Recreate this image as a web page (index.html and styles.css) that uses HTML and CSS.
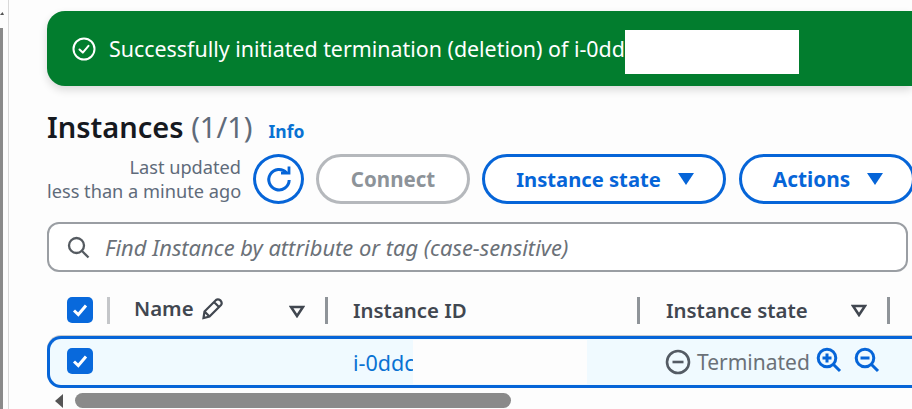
FILE: index.html
```html
<!DOCTYPE html>
<html lang="en">
<head>
<meta charset="utf-8">
<title>Instances</title>
<link rel="stylesheet" href="styles.css">
</head>
<body>
<div class="page">
  <aside class="rail">
    <svg class="rail-arrow" width="4" height="5" viewBox="0 0 4 5"><path d="M0 4 L2.5 1 L4 4Z" fill="#555"/></svg>
    <div class="rail-bar"></div>
  </aside>
  <main class="main">
    <div class="banner">
      <svg class="banner-icon" width="24" height="24" viewBox="0 0 24 24" fill="none" stroke="#fff" stroke-width="2"><circle cx="12" cy="12" r="10.5"/><path d="M7.5 12.5 L10.8 15.6 L16.5 8.8" stroke-linecap="round" stroke-linejoin="round"/></svg>
      <span class="banner-text">Successfully initiated termination (deletion) of i-0dd</span><span class="redact-banner"></span>
    </div>
    <div class="title-row">
      <h1 class="title">Instances <span class="count">(1/1)</span></h1>
      <a class="info">Info</a>
    </div>
    <div class="actions">
      <div class="updated">Last updated<br>less than a minute ago</div>
      <button class="round">
        <svg width="28" height="28" viewBox="0 0 28 28" fill="none" stroke="#0665d8" stroke-width="3"><path d="M21.5 7.8 A10.2 10.2 0 1 0 24.2 15"/><path d="M16 8.2 H24 V1.5" stroke-width="2.8"/></svg>
      </button>
      <button class="btn disabled connect">Connect</button>
      <button class="btn state">Instance state<i class="caret"></i></button>
      <button class="btn acts">Actions<i class="caret"></i></button>
    </div>
    <div class="search">
      <svg width="24" height="24" viewBox="0 0 24 24" fill="none" stroke="#555b61" stroke-width="2.3"><circle cx="10.5" cy="10.5" r="7.5"/><path d="M16 16 L22.5 22.5"/></svg>
      <span class="placeholder">Find Instance by attribute or tag (case-sensitive)</span>
    </div>
    <div class="thead">
      <label class="box"><svg width="26" height="26" viewBox="0 0 26 26"><rect width="26" height="26" rx="5" fill="#0869dc"/><path d="M7 13.5 L11.3 17.5 L19 8.5" fill="none" stroke="#fff" stroke-width="3"/></svg></label>
      <i class="sep sep-a"></i>
      <div class="th th-name">Name
        <svg class="pencil" width="23" height="23" viewBox="0 0 23 23" fill="none" stroke="#414750" stroke-width="2.2"><path d="M2.5 21 L3.5 14.5 L15 3 Q17 1.6 19.5 3.5 Q21.6 6 20 8 L8.5 19.6 Z M3.5 14.5 L8.5 19.6 M13 5 L18 10"/></svg>
      </div>
      <svg class="sort sort-a" width="16" height="13" viewBox="0 0 16 13"><path d="M2 2 H14 L8 11Z" fill="none" stroke="#414750" stroke-width="2.6"/></svg>
      <i class="sep sep-b"></i>
      <div class="th th-id">Instance ID</div>
      <i class="sep sep-c"></i>
      <div class="th th-state">Instance state</div>
      <svg class="sort sort-b" width="16" height="13" viewBox="0 0 16 13"><path d="M2 2 H14 L8 11Z" fill="none" stroke="#414750" stroke-width="2.6"/></svg>
      <i class="sep sep-d"></i>
    </div>
    <div class="row">
      <label class="box"><svg width="26" height="26" viewBox="0 0 26 26"><rect width="26" height="26" rx="5" fill="#0869dc"/><path d="M7 13.5 L11.3 17.5 L19 8.5" fill="none" stroke="#fff" stroke-width="3"/></svg></label>
      <a class="id">i-0ddc</a>
      <div class="redact-row"></div>
      <svg class="state-icon" width="26" height="26" viewBox="0 0 26 26" fill="none" stroke="#545b64" stroke-width="2.6"><circle cx="13" cy="13" r="11"/><path d="M7.5 13 H18.5"/></svg>
      <span class="terminated">Terminated</span>
      <svg class="zoom-in" width="26" height="26" viewBox="0 0 26 26" fill="none" stroke="#0665d8" stroke-width="3"><circle cx="11" cy="11" r="8.8"/><path d="M17.5 17.5 L24 24 M6.5 11 H15.5 M11 6.5 V15.5"/></svg>
      <svg class="zoom-out" width="26" height="26" viewBox="0 0 26 26" fill="none" stroke="#0665d8" stroke-width="3"><circle cx="11" cy="11" r="8.8"/><path d="M17.5 17.5 L24 24 M6.5 11 H15.5"/></svg>
    </div>
    <div class="scroll">
      <svg width="8" height="14" viewBox="0 0 8 14"><path d="M8 0 V14 L0 7Z" fill="#555"/></svg>
      <div class="thumb"></div>
    </div>
  </main>
</div>
</body>
</html>
```
FILE: styles.css
```css
* { box-sizing: border-box; }
html, body { margin: 0; height: 100%; }
body {
  width: 912px;
  height: 409px;
  overflow: hidden;
  background: #fdfdfd;
  font-family: "Noto Sans", "Open Sans", sans-serif;
  color: #16191f;
}
.page { display: flex; height: 409px; overflow: hidden; }
.rail {
  width: 47px;
  flex: none;
  padding-top: 11px;
  background: linear-gradient(to right, transparent 8px, #d9d9d9 8px, #d9d9d9 9px, transparent 9px);
}
.rail-arrow { display: block; margin-bottom: 12px; }
.rail-bar { width: 3px; height: 390px; background: #8a8a8a; }
.main { flex: 1; min-width: 0; padding-top: 11px; }
.banner {
  display: flex;
  align-items: center;
  width: 865px;
  height: 75px;
  padding-left: 25px;
  background: #027d2e;
  border-radius: 18px 0 0 18px;
  box-shadow: 0 4px 9px rgba(0, 0, 0, .14);
  color: #fff;
}
.banner-icon { flex: none; margin-right: 13px; }
.banner-text { flex: none; font-size: 21.4px; white-space: nowrap; width: 516px; }
.redact-banner { flex: none; width: 174px; height: 44px; margin-top: 7px; background: #fff; }
.title-row { display: flex; align-items: baseline; height: 42px; margin-top: 20px; }
.title { margin: 0; font-size: 29px; font-weight: 600; line-height: 42px; white-space: nowrap; }
.count { font-weight: 400; color: #5f6b7a; }
.info { margin-left: 16px; font-size: 17.5px; font-weight: 700; color: #0972d3; }
.actions { display: flex; align-items: center; height: 52px; margin-top: 5px; }
.updated { flex: none; width: 194px; font-size: 18.2px; line-height: 24px; text-align: right; color: #5f6b7a; white-space: nowrap; }
button { font-family: inherit; background: #fff; padding: 0; }
.round {
  display: flex; align-items: center; justify-content: center;
  flex: none;
  width: 51px; height: 50px; margin-left: 12px;
  border: 3px solid #0665d8; border-radius: 50%;
}
.btn {
  display: flex; align-items: center; justify-content: center;
  flex: none;
  height: 50px;
  border: 3px solid #0665d8;
  border-radius: 25px;
  font-size: 20.2px;
  font-weight: 700;
  color: #0665d8;
  white-space: nowrap;
}
.connect { width: 154px; margin-left: 12px; font-size: 20.5px; }
.disabled { border-color: #b5b8bc; color: #8d9399; }
.state { width: 244px; margin-left: 12px; padding-left: 2px; }
.acts { width: 176px; margin-left: 13px; padding-left: 2px; font-size: 20.8px; }
.caret { width: 0; height: 0; margin-left: 17px; border-left: 8px solid transparent; border-right: 8px solid transparent; border-top: 12px solid #0665d8; }
.search {
  display: flex; align-items: center;
  width: 861px; height: 50px; margin-top: 17px; padding-left: 17px;
  background: #fff;
  border: 2px solid #9a9ea3;
  border-radius: 12px;
}
.placeholder { margin-left: 15px; font-size: 21.9px; font-style: italic; color: #6b7178; white-space: nowrap; }
.thead {
  display: flex; align-items: center;
  width: 865px; height: 41px; margin-top: 23px; padding-bottom: 11px;
}
.box { display: block; flex: none; width: 26px; height: 26px; margin-left: 20px; }
.box svg { display: block; }
.sep { display: block; flex: none; width: 3px; height: 27px; background: #8f9499; }
.sep-a { margin-left: 14px; background: #c4c6c9; }
.th { font-size: 20.4px; font-weight: 600; color: #414750; white-space: nowrap; }
.th-name { display: flex; align-items: center; width: 155px; margin-left: 24px; margin-top: -4px; }
.pencil { margin-left: 7px; }
.sort-a { flex: none; margin-top: 2px; }
.sep-b { margin-left: 20px; }
.th-id { width: 284px; margin-left: 25px; }
.th-state { width: 185px; margin-left: 26px; }
.sort-b { flex: none; }
.sep-d { margin-left: 20px; }
.row {
  display: flex; align-items: center;
  width: 865px; height: 52px;
  background: #f0faff;
  border: 3px solid #0665d8;
  border-right: 0;
  border-radius: 14px 0 0 14px;
  box-shadow: 0 -1px 0 #c9cbce;
}
.row .box { margin-left: 17px; margin-top: -2px; }
.id { flex: none; width: 60px; margin-left: 260px; font-size: 21.5px; color: #0972d3; white-space: nowrap; }
.redact-row { flex: none; position: relative; width: 174px; height: 44px; background: #fdfdfd; }
.state-icon { flex: none; margin-left: 78px; }
.terminated { flex: none; width: 111px; margin-left: 6px; font-size: 21px; color: #6b7178; white-space: nowrap; }
.zoom-in { flex: none; margin-left: 8px; margin-top: -4px; }
.zoom-out { flex: none; margin-left: 12px; margin-top: -4px; }
.scroll { display: flex; align-items: center; height: 15px; margin-top: 5px; padding-left: 8px; }
.thumb { width: 436px; height: 15px; margin-left: 12px; background: #8a8a8a; border-radius: 8px; }
```
